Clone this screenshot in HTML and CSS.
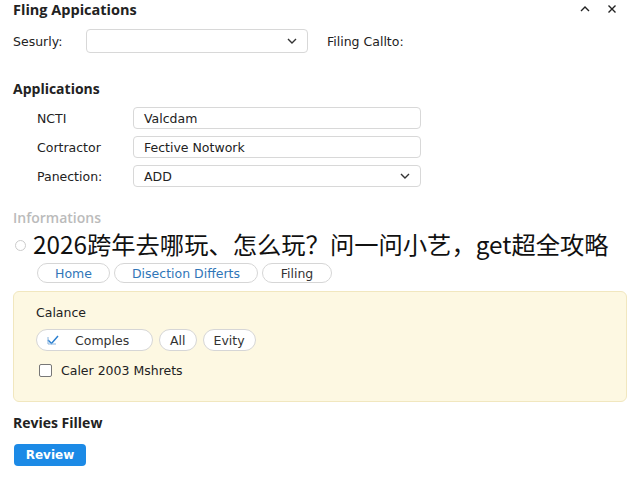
FILE: index.html
```html
<!DOCTYPE html>
<html lang="en">
<head>
  <meta charset="UTF-8" />
  <meta name="viewport" content="width=device-width, initial-scale=1.0"/>
  <title>Fling Applications</title>
  <link rel="stylesheet" href="styles.css">
</head>
<body>
  <div class="panel">
    <div class="panel-header">
      <span class="panel-title">Fling Appications</span>
      <div class="panel-tools">
        <svg width="12" height="12" viewBox="0 0 12 12"><path d="M2 8 L6 4 L10 8" fill="none" stroke="#222" stroke-width="1.4"/></svg>
        <svg width="12" height="12" viewBox="0 0 12 12"><path d="M2.5 2.5 L9.5 9.5 M9.5 2.5 L2.5 9.5" fill="none" stroke="#222" stroke-width="1.4"/></svg>
      </div>
    </div>

    <div class="top-row">
      <label>Sesurly:</label>
      <div class="select wide"><span></span><svg class="caret" width="10" height="6" viewBox="0 0 10 6"><path d="M1 1 L5 5 L9 1" fill="none" stroke="#333" stroke-width="1.4"/></svg></div>
      <label class="callto">Filing Callto:</label>
    </div>

    <h3 class="section-title">Applications</h3>
    <div class="app-grid">
      <label>NCTI</label>
      <div class="field">Valcdam</div>
      <label>Cortractor</label>
      <div class="field">Fective Notwork</div>
      <label>Panection:</label>
      <div class="select field"><span>ADD</span><svg class="caret" width="10" height="6" viewBox="0 0 10 6"><path d="M1 1 L5 5 L9 1" fill="none" stroke="#333" stroke-width="1.4"/></svg></div>
    </div>

    <h3 class="section-title muted">Informations</h3>
    <div class="radio-row">
      <span class="radio"></span>
    </div>

    <div class="tabs">
      <span class="pill link">Home</span>
      <span class="pill link">Disection Differts</span>
      <span class="pill">Filing</span>
    </div>

    <div class="notice">
      <div class="notice-title">Calance</div>
      <div class="chips">
        <span class="pill chip">
          <svg width="12" height="10" viewBox="0 0 12 10"><path d="M1 5 L4.5 8.5 L11 1" fill="none" stroke="#2a7fd0" stroke-width="1.5"/><path d="M1 2 V9 H9" fill="none" stroke="#8ab4de" stroke-width="1"/></svg>
          Comples
        </span>
        <span class="pill chip">All</span>
        <span class="pill chip">Evity</span>
      </div>
      <div class="check-row">
        <span class="checkbox"></span>
        <span>Caler 2003 Mshrets</span>
      </div>
    </div>

    <h3 class="section-title last">Revies Fillew</h3>
    <button class="review-btn">Review</button>
  </div>

  <div class="caption">2026跨年去哪玩、怎么玩？问一问小艺，get超全攻略</div>
</body>
</html>
```

FILE: styles.css
```css
body {
  margin: 0;
  background: white;
  font-family: "DejaVu Sans", "Liberation Sans", sans-serif;
  font-size: 12.5px;
  color: #222;
}

.panel {
  padding: 0 13px;
}

.panel-header {
  display: flex;
  justify-content: space-between;
  align-items: center;
  height: 18px;
}

.panel-title {
  font-family: "Open Sans", sans-serif;
  font-weight: 700;
  font-size: 14.5px;
}

.panel-tools {
  display: flex;
  gap: 15px;
  padding-right: 9px;
}

.top-row {
  margin-top: 11px;
  display: flex;
  align-items: center;
}

.top-row label {
  width: 73px;
}

.top-row .callto {
  margin-left: 19px;
  width: auto;
}

.select {
  display: flex;
  justify-content: space-between;
  align-items: center;
  box-sizing: border-box;
  border: 1px solid #d8d8d8;
  border-radius: 4px;
  padding: 0 10px;
  background: white;
}

.select.wide {
  width: 222px;
  height: 24px;
}

.section-title {
  margin: 27px 0 0;
  font-family: "Open Sans", sans-serif;
  font-size: 14px;
  font-weight: 700;
  line-height: 18px;
}

.section-title.muted {
  margin-top: 22px;
  color: #bbb;
  font-weight: 600;
}

.section-title.last {
  margin-top: 12px;
}

.app-grid {
  margin-top: 9px;
  padding-left: 24px;
  display: grid;
  grid-template-columns: 96px 288px;
  row-gap: 7px;
  align-items: center;
}

.field {
  box-sizing: border-box;
  height: 22px;
  border: 1px solid #d8d8d8;
  border-radius: 4px;
  padding: 0 10px;
  display: flex;
  align-items: center;
}

.field.select {
  justify-content: space-between;
}

.radio-row {
  margin-top: 9px;
  display: flex;
  align-items: center;
  height: 18px;
  padding-left: 2px;
}

.radio {
  width: 9px;
  height: 9px;
  border: 1px solid #ccc;
  border-radius: 50%;
}

.tabs {
  margin-top: 9px;
  padding-left: 24px;
  display: flex;
  gap: 4px;
}

.pill {
  box-sizing: border-box;
  display: inline-flex;
  align-items: center;
  justify-content: center;
  height: 20px;
  padding: 0 10px;
  border: 1px solid #d6d6d6;
  border-radius: 11px;
  background: white;
  color: #333;
}

.tabs .pill:first-child {
  width: 73px;
}

.tabs .pill:nth-child(2) {
  width: 144px;
}

.tabs .pill:last-child {
  width: 70px;
}

.pill.link {
  color: #2f76b8;
}

.notice {
  margin-top: 8px;
  box-sizing: border-box;
  height: 111px;
  background: #fdf8e2;
  border: 1px solid #f1e7bf;
  border-radius: 6px;
  padding: 13px 22px 0;
}

.notice-title {
  line-height: 16px;
}

.chips {
  margin-top: 8px;
  display: flex;
  gap: 6px;
}

.chip {
  height: 22px;
}

.chip:first-child {
  width: 117px;
  justify-content: flex-start;
  padding-left: 10px;
  gap: 16px;
}

.check-row {
  margin-top: 10px;
  display: flex;
  align-items: center;
  gap: 9px;
  height: 18px;
  padding-left: 3px;
}

.checkbox {
  box-sizing: border-box;
  width: 13px;
  height: 13px;
  border: 1px solid #777;
  border-radius: 2px;
  background: white;
}

.review-btn {
  display: block;
  width: 72px;
  height: 22px;
  margin: 12px 0 0 1px;
  border: none;
  border-radius: 4px;
  background: #1c8ae6;
  color: white;
  font-family: inherit;
  font-weight: 700;
  font-size: 12px;
  cursor: pointer;
}

.caption {
  position: absolute;
  top: 227px;
  left: 33px;
  font-family: "Noto Sans CJK SC", "Noto Sans", sans-serif;
  font-size: 24.3px;
  line-height: 34px;
  color: #111;
  white-space: nowrap;
}
```
